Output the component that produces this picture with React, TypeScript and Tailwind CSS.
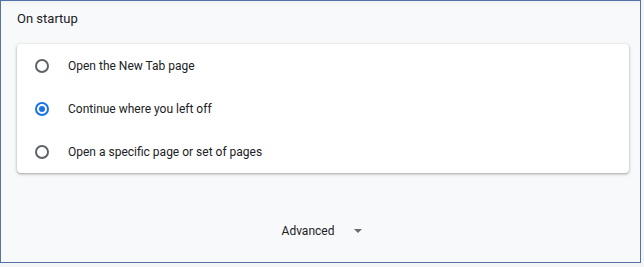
import React from 'react';

const OPTIONS = [
  { label: 'Open the New Tab page', checked: false },
  { label: 'Continue where you left off', checked: true },
  { label: 'Open a specific page or set of pages', checked: false },
];

function Radio({ checked }: { checked: boolean }) {
  return (
    <div
      className={`w-[14px] h-[14px] rounded-full border-2 flex items-center justify-center shrink-0 ${
        checked ? 'border-[#1a73e8]' : 'border-[#5f6368]'
      }`}
    >
      {checked && <div className="w-[6px] h-[6px] rounded-full bg-[#1a73e8]" />}
    </div>
  );
}

export default function App() {
  return (
    <div className="w-[644px] h-[267px] bg-[#f4f5f7] font-['Roboto','Liberation_Sans',sans-serif] text-[12px] text-[#202124]">
      <div className="w-[641px] h-[263px] border border-[#5272a8] bg-[#f8f9fa] flex flex-col shadow-[inset_0_6px_6px_-6px_rgba(0,0,0,0.08)]">
        <div className="h-[43px] pl-4 pt-[9px] leading-[18px] text-[13px]">On startup</div>

        <div className="ml-4 w-[612px] bg-white rounded-[4px] shadow-[0_1px_2px_rgba(60,64,67,0.3),0_1px_3px_1px_rgba(60,64,67,0.15)]">
          {OPTIONS.map(o => (
            <div key={o.label} className="h-[43px] flex items-center pl-[18px] gap-[19px]">
              <Radio checked={o.checked} />
              <span className="leading-[18px]">{o.label}</span>
            </div>
          ))}
        </div>

        <div className="flex-1 flex items-end justify-center pb-[22px]">
          <div className="flex items-center h-[18px] ml-[3px]">
            <span className="leading-[18px]">Advanced</span>
            <svg className="ml-[20px]" width="8" height="4" viewBox="0 0 8 4">
              <path d="M0 0 L8 0 L4 4 Z" fill="#6b6b6b" />
            </svg>
          </div>
        </div>
      </div>
    </div>
  );
}
